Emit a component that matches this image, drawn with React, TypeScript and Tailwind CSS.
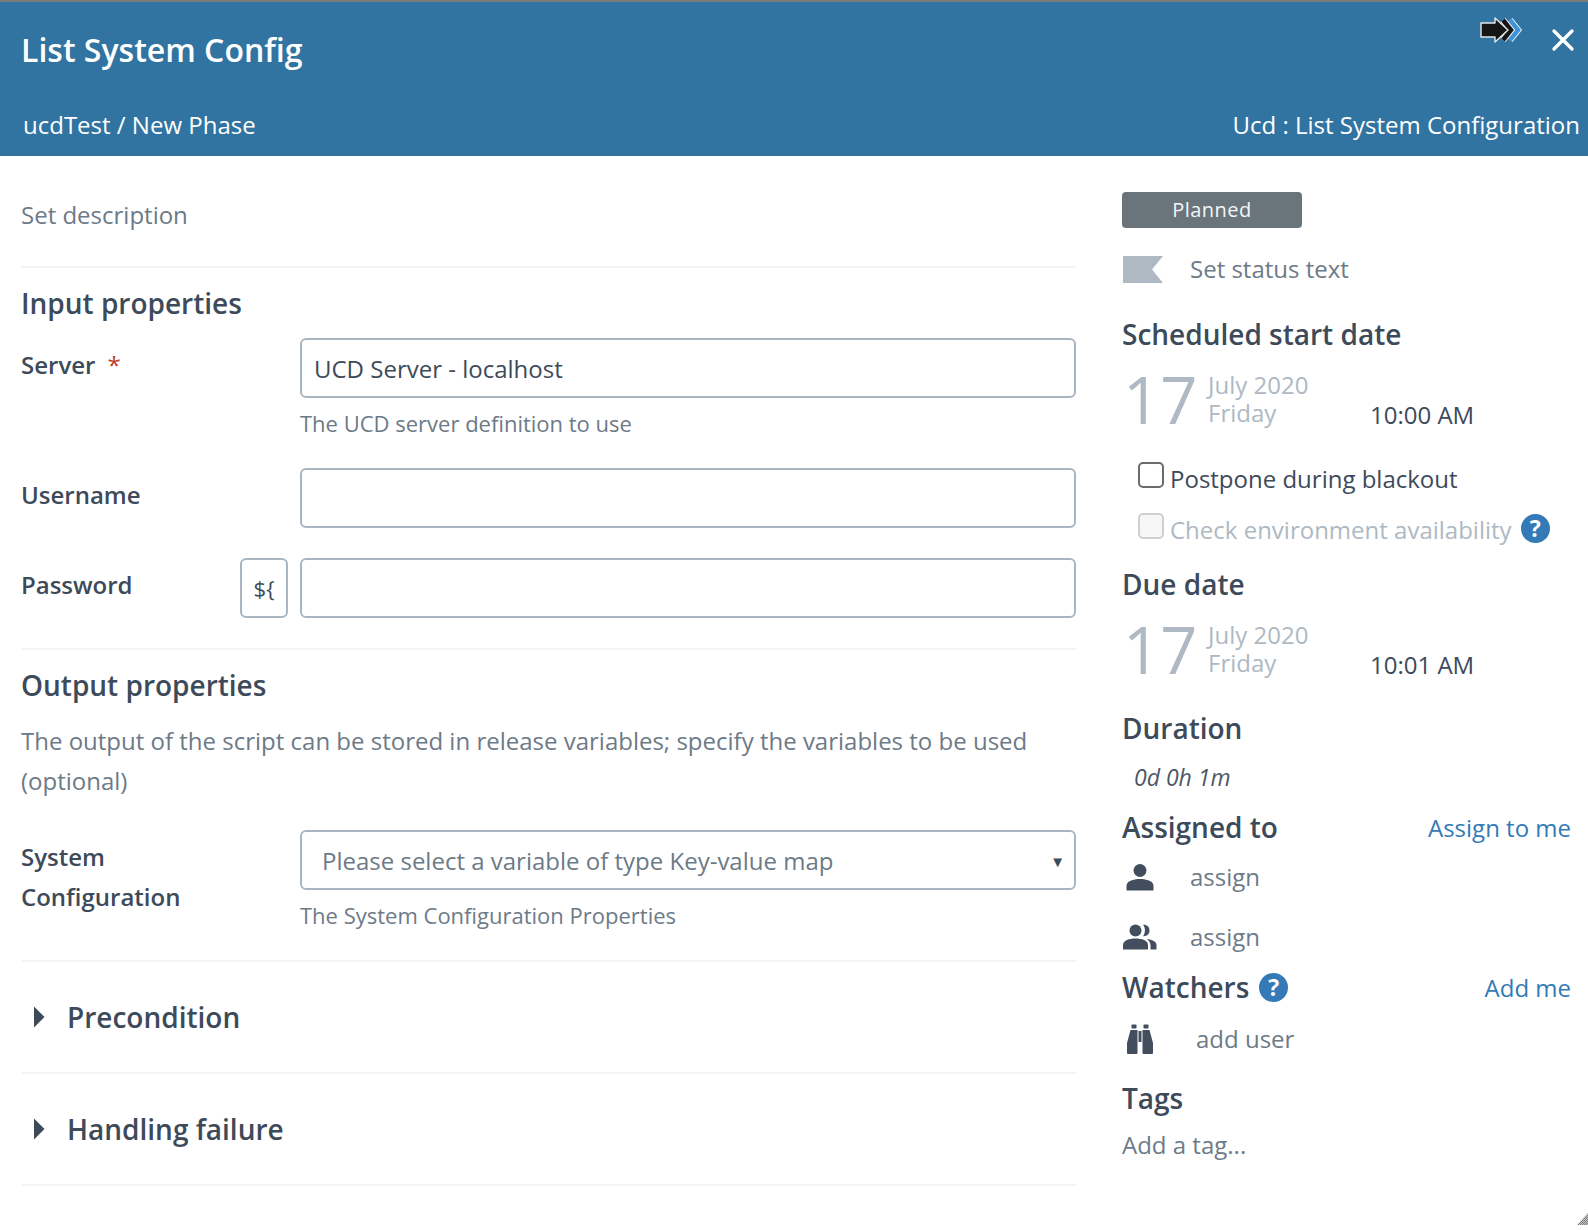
import { X } from "lucide-react";

const font = { fontFamily: '"Open Sans", "Noto Sans", sans-serif' };

function HelpIcon({ className }: { className?: string }) {
  return (
    <span className={`inline-flex h-[29px] w-[29px] shrink-0 items-center justify-center rounded-full bg-[#337ab7] text-[23px] font-bold text-white ${className ?? ""}`}>
      ?
    </span>
  );
}

function Caret() {
  return (
    <svg width="12" height="22" viewBox="0 0 12 22" className="shrink-0">
      <path d="M1 0.5 L11.5 11 L1 21.5 Z" fill="#3d4a5a" />
    </svg>
  );
}

function FlowIcon() {
  return (
    <svg width="44" height="28" viewBox="0 0 44 28" fill="none" strokeLinejoin="miter">
      <polyline points="30,4 38,14 30,24" stroke="#e8eef4" strokeWidth="6.5" />
      <polyline points="30,4 38,14 30,24" stroke="#3f93dc" strokeWidth="4.5" />
      <polyline points="23,4 31,14 23,24" stroke="#e8eef4" strokeWidth="6.5" />
      <polyline points="23,4 31,14 23,24" stroke="#161616" strokeWidth="4.5" />
      <path d="M1 7 H15 V2 L28 14 L15 26 V21 H1 Z" fill="#161616" stroke="#e8e8e8" strokeWidth="1.4" strokeLinejoin="round" />
    </svg>
  );
}

function UserIcon() {
  return (
    <svg width="28" height="28" viewBox="0 0 28 28" fill="#424e5e">
      <circle cx="14" cy="7.5" r="6.5" />
      <path d="M0.5 27.5 V23 C0.5 18 7 16 14 16 C21 16 27.5 18 27.5 23 V27.5 Z" />
    </svg>
  );
}

function TeamIcon() {
  return (
    <svg width="34" height="26" viewBox="0 0 34 26" fill="#424e5e">
      <circle cx="12.5" cy="6.5" r="6" />
      <path d="M0 25.5 V21 C0 16.5 6 14.5 12.5 14.5 C19 14.5 25 16.5 25 21 V25.5 Z" />
      <path d="M20 0.8 C24 0.5 26.5 3 26.5 6.5 C26.5 10 24 12.5 20 12.2 C22.6 9.5 22.6 3.5 20 0.8 Z" />
      <path d="M24 15 C29 15.5 33.5 17.5 33.5 21 V25.5 H27.5 V21.5 C27.5 19 26 16.8 24 15 Z" />
    </svg>
  );
}

function BinocularsIcon() {
  return (
    <svg width="26" height="30" viewBox="0 0 26 30" fill="#424e5e">
      <rect x="4.5" y="0.5" width="5" height="4" rx="0.8" />
      <rect x="16.5" y="0.5" width="5" height="4" rx="0.8" />
      <path d="M3.5 6 H10.5 V29 Q10.5 30 9.5 30 H1 Q0 30 0 29 V19 Z" />
      <path d="M15.5 6 H22.5 L26 19 V29 Q26 30 25 30 H16.5 Q15.5 30 15.5 29 Z" />
      <rect x="11.5" y="7" width="3" height="11" />
    </svg>
  );
}

function FlagIcon() {
  return (
    <svg width="40" height="27" viewBox="0 0 40 27">
      <path d="M0 0 H40 L29 13.5 L40 27 H0 Z" fill="#aeb9c3" />
    </svg>
  );
}

function Field({ label, required, children, hint }: { label: string; required?: boolean; children?: React.ReactNode; hint?: string }) {
  return (
    <div className="flex">
      <div className="w-[279px] shrink-0 pt-[9px] text-[24px] font-semibold text-[#3d4a5a]">
        {label}
        {required ? <span className="ml-3 font-normal text-[#c0392b]">*</span> : null}
      </div>
      <div className="min-w-0 flex-1">
        {children}
        {hint ? <p className="mt-[8px] text-[22px] leading-[34px] text-[#6d7a87]">{hint}</p> : null}
      </div>
    </div>
  );
}

function TextBox({ value }: { value?: string }) {
  return (
    <div className="flex h-[60px] items-center rounded-[6px] border-2 border-[#a9b5c1] px-3 pt-[2px] text-[24px] text-[#3d4a5a]">
      {value}
    </div>
  );
}

function DateBlock({ month, weekday, time }: { month: string; weekday: string; time: string }) {
  return (
    <div className="flex h-[72px] items-start">
      <span className="ml-[1px] w-[85px] shrink-0 text-[65px] leading-[65px] text-[#aeb9c3]">17</span>
      <div className="w-[162px] shrink-0 pt-[4px] text-[24px] leading-[28px] text-[#aeb9c3]">
        <div>{month}</div>
        <div>{weekday}</div>
      </div>
      <span className="pt-[30px] text-[24px] leading-[36px] text-[#3d4a5a]">{time}</span>
    </div>
  );
}

function SideTitle({ children }: { children: React.ReactNode }) {
  return <h3 className="text-[28px] font-semibold leading-[36px] text-[#3d4a5a]">{children}</h3>;
}

export default function App() {
  return (
    <div className="relative h-[1230px] w-[1588px] overflow-hidden bg-white" style={font}>
      <header className="h-[156px] border-t-2 border-[#7a7a7a] bg-[#3174a1] text-white">
        <div className="flex h-[105px] items-start justify-between pl-[21px] pr-[7px]">
          <h1 className="pt-[26px] text-[32px] font-semibold leading-[44px]">List System Config</h1>
          <div className="flex items-start gap-[21px] pt-[14px]">
            <FlowIcon />
            <X className="mt-[6px]" size={36} strokeWidth={2.2} />
          </div>
        </div>
        <div className="flex items-center justify-between pl-[23px] pr-[8px] text-[24px] leading-[36px]">
          <span>ucdTest / New Phase</span>
          <span>Ucd : List System Configuration</span>
        </div>
      </header>

      <main className="flex">
        <div className="ml-[21px] w-[1055px] shrink-0">
          <div className="flex h-[112px] items-start border-b-2 border-[#f2f3f7] pt-[41px] text-[24px] leading-[36px] text-[#6d7a87]">
            Set description
          </div>
          <h2 className="mt-[17px] text-[28px] font-semibold leading-[36px] text-[#3d4a5a]">Input properties</h2>
          <div className="mt-[17px]">
            <Field label="Server" required hint="The UCD server definition to use">
              <TextBox value="UCD Server - localhost" />
            </Field>
          </div>
          <div className="mt-[28px]">
            <Field label="Username">
              <TextBox />
            </Field>
          </div>
          <div className="mt-[30px] flex">
            <div className="flex w-[279px] shrink-0 justify-between pr-[12px]">
              <span className="pt-[9px] text-[24px] font-semibold text-[#3d4a5a]">Password</span>
              <span className="flex h-[60px] w-[48px] items-center justify-center rounded-[6px] border-2 border-[#a9b5c1] text-[22px] text-[#3d4a5a]">{"${"}</span>
            </div>
            <div className="flex-1">
              <TextBox />
            </div>
          </div>
          <div className="mt-[30px] border-b-2 border-[#f2f3f7]" />
          <h2 className="mt-[17px] text-[28px] font-semibold leading-[36px] text-[#3d4a5a]">Output properties</h2>
          <p className="mt-[18px] text-[24px] leading-[40px] text-[#6d7a87]">
            The output of the script can be stored in release variables; specify the variables to be used (optional)
          </p>
          <div className="mt-[29px]">
            <div className="flex">
              <div className="w-[279px] shrink-0 pt-[7px] text-[24px] font-semibold leading-[40px] text-[#3d4a5a]">
                System
                <br />
                Configuration
              </div>
              <div className="flex-1">
                <div className="flex h-[60px] items-center justify-between rounded-[6px] border-2 border-[#a9b5c1] pl-[20px] pr-[9px] pt-[2px] text-[24px] text-[#6d7a87]">
                  <span>Please select a variable of type Key-value map</span>
                  <span className="text-[15px] text-[#3d4a5a]">▼</span>
                </div>
                <p className="mt-[8px] text-[22px] leading-[34px] text-[#6d7a87]">The System Configuration Properties</p>
              </div>
            </div>
          </div>
          <div className="mt-[28px] border-b-2 border-[#f2f3f7]" />
          <div className="flex h-[112px] items-center gap-[22px] border-b-2 border-[#f2f3f7] pl-[12px] text-[28px] font-semibold text-[#3d4a5a]">
            <Caret />
            Precondition
          </div>
          <div className="flex h-[112px] items-center gap-[22px] border-b-2 border-[#f2f3f7] pl-[12px] text-[28px] font-semibold text-[#3d4a5a]">
            <Caret />
            Handling failure
          </div>
        </div>

        <aside className="ml-[46px] w-[449px] shrink-0 pt-[36px]">
          <div className="flex h-[36px] w-[180px] items-center justify-center rounded-[4px] bg-[#69747b] text-[20px] tracking-[0.5px] text-[#f4f6f7]">
            Planned
          </div>
          <div className="mt-[23px] flex h-[36px] items-center">
            <span className="ml-[1px] w-[67px] shrink-0"><FlagIcon /></span>
            <span className="text-[24px] text-[#6d7a87]">Set status text</span>
          </div>
          <div className="mt-[29px]">
            <SideTitle>Scheduled start date</SideTitle>
          </div>
          <div className="mt-[15px]">
            <DateBlock month="July 2020" weekday="Friday" time="10:00 AM" />
          </div>
          <div className="ml-[16px] mt-[22px] flex h-[36px] items-center text-[24px] text-[#3d4a5a]">
            <span className="mb-[8px] h-[26px] w-[26px] shrink-0 rounded-[5px] border-2 border-[#6b6b6b]" />
            <span className="ml-[6px]">Postpone during blackout</span>
          </div>
          <div className="ml-[16px] mt-[15px] flex h-[36px] items-center text-[24px] text-[#aeb9c3]">
            <span className="mb-[8px] h-[26px] w-[26px] shrink-0 rounded-[5px] border-2 border-[#d0d0d0] bg-[#f7f7f7]" />
            <span className="ml-[6px]">Check environment availability</span>
            <HelpIcon className="mb-[4px] ml-[9px]" />
          </div>
          <div className="mt-[18px]">
            <SideTitle>Due date</SideTitle>
          </div>
          <div className="mt-[15px]">
            <DateBlock month="July 2020" weekday="Friday" time="10:01 AM" />
          </div>
          <div className="mt-[21px]">
            <SideTitle>Duration</SideTitle>
          </div>
          <div className="ml-[12px] mt-[13px] text-[23px] italic leading-[36px] text-[#4a5766]">0d 0h 1m</div>
          <div className="mt-[14px] flex items-center justify-between">
            <SideTitle>Assigned to</SideTitle>
            <a className="h-[36px] text-[24px] leading-[38px] text-[#337ab7]">Assign to me</a>
          </div>
          <div className="mt-[14px] flex h-[36px] items-center">
            <span className="ml-[4px] w-[64px] shrink-0"><UserIcon /></span>
            <span className="text-[24px] text-[#6d7a87]">assign</span>
          </div>
          <div className="mt-[24px] flex h-[36px] items-center">
            <span className="ml-[1px] w-[67px] shrink-0"><TeamIcon /></span>
            <span className="text-[24px] text-[#6d7a87]">assign</span>
          </div>
          <div className="mt-[14px] flex items-center justify-between">
            <div className="flex items-center gap-[10px]">
              <SideTitle>Watchers</SideTitle>
              <HelpIcon />
            </div>
            <a className="h-[36px] text-[24px] leading-[38px] text-[#337ab7]">Add me</a>
          </div>
          <div className="mt-[16px] flex h-[36px] items-center">
            <span className="ml-[5px] w-[69px] shrink-0"><BinocularsIcon /></span>
            <span className="text-[24px] text-[#6d7a87]">add user</span>
          </div>
          <div className="mt-[23px]">
            <SideTitle>Tags</SideTitle>
          </div>
          <div className="mt-[11px] text-[24px] leading-[36px] text-[#6d7a87]">Add a tag...</div>
        </aside>
      </main>

      <svg className="absolute bottom-[5px] right-0" width="11" height="12" viewBox="0 0 11 12">
        <defs>
          <pattern id="grip" width="2" height="2" patternUnits="userSpaceOnUse">
            <rect width="2" height="2" fill="#c4c4c4" />
            <rect width="1" height="1" fill="#7f7f7f" />
            <rect x="1" y="1" width="1" height="1" fill="#7f7f7f" />
          </pattern>
        </defs>
        <path d="M11 0 V12 H0 Z" fill="url(#grip)" />
      </svg>
    </div>
  );
}
